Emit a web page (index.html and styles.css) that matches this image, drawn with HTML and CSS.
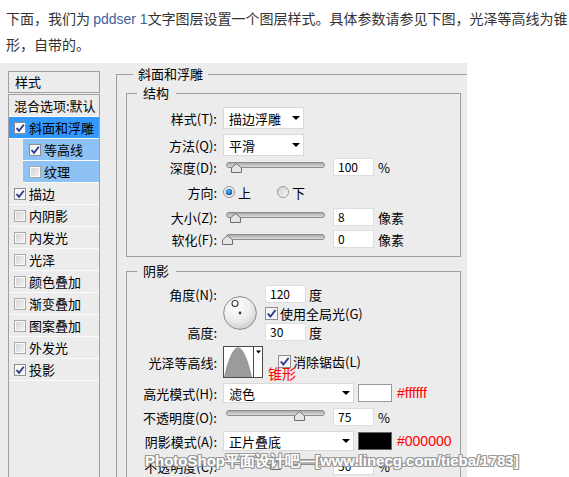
FILE: index.html
```html
<!DOCTYPE html>
<html lang="zh">
<head>
<meta charset="utf-8">
<link rel="stylesheet" href="styles.css">
</head>
<body>
<p class="intro">下面，我们为 <span class="kw">pddser 1</span>文字图层设置一个图层样式。具体参数请参见下图，光泽等高线为锥<br>形，自带的。</p>
<div class="shot">
  <div class="side">
    <div class="side-head">样式</div>
    <ul class="side-list">
      <li class="item">混合选项:默认</li>
      <li class="item sel"><span class="cb"><svg viewBox="0 0 12 12" width="12" height="12"><path d="M2.5 6 L5 8.8 L9.8 2.8" fill="none" stroke="#26368f" stroke-width="1.8"/></svg></span>斜面和浮雕</li>
      <li class="item sub"><span class="cb"><svg viewBox="0 0 12 12" width="12" height="12"><path d="M2.5 6 L5 8.8 L9.8 2.8" fill="none" stroke="#26368f" stroke-width="1.8"/></svg></span>等高线</li>
      <li class="item sub"><span class="cb off"></span>纹理</li>
      <li class="item"><span class="cb"><svg viewBox="0 0 12 12" width="12" height="12"><path d="M2.5 6 L5 8.8 L9.8 2.8" fill="none" stroke="#26368f" stroke-width="1.8"/></svg></span>描边</li>
      <li class="item"><span class="cb off"></span>内阴影</li>
      <li class="item"><span class="cb off"></span>内发光</li>
      <li class="item"><span class="cb off"></span>光泽</li>
      <li class="item"><span class="cb off"></span>颜色叠加</li>
      <li class="item"><span class="cb off"></span>渐变叠加</li>
      <li class="item"><span class="cb off"></span>图案叠加</li>
      <li class="item"><span class="cb off"></span>外发光</li>
      <li class="item"><span class="cb"><svg viewBox="0 0 12 12" width="12" height="12"><path d="M2.5 6 L5 8.8 L9.8 2.8" fill="none" stroke="#26368f" stroke-width="1.8"/></svg></span>投影</li>
      <li class="item blank"></li>
    </ul>
  </div>

  <div class="main">
    <fieldset class="fs-outer">
      <legend>斜面和浮雕</legend>

      <fieldset class="fs-inner fs-struct">
        <legend>结构</legend>
        <div class="row r-style">
          <span class="lbl">样式(T):</span>
          <span class="select"><span>描边浮雕</span><span class="arrow"></span></span>
        </div>
        <div class="row r-method">
          <span class="lbl">方法(Q):</span>
          <span class="select"><span>平滑</span><span class="arrow"></span></span>
        </div>
        <div class="row r-depth">
          <span class="lbl">深度(D):</span>
          <span class="slider"><span class="track"></span><svg class="thumb" style="left:5px" viewBox="0 0 11 10" width="11" height="10"><path d="M0.5 9.5 V4.8 L5.5 0.6 L10.5 4.8 V9.5 Z" fill="#e6e6e6" stroke="#6e6e6e"/></svg></span>
          <span class="num">100</span>
          <span class="unit">%</span>
        </div>
        <div class="row r-dir">
          <span class="lbl">方向:</span>
          <svg class="radio" viewBox="0 0 12 12" width="12" height="12"><defs><radialGradient id="rb" cx="0.4" cy="0.35" r="0.7"><stop offset="0" stop-color="#5fb2f0"/><stop offset="1" stop-color="#0b4f9a"/></radialGradient></defs><circle cx="6" cy="6" r="5.5" fill="#f3f3f3" stroke="#8f8f8f"/><circle cx="6" cy="6" r="3.3" fill="url(#rb)"/></svg>
          <span class="rtext">上</span>
          <svg class="radio r2" viewBox="0 0 12 12" width="12" height="12"><defs><linearGradient id="rg" x1="0" y1="0" x2="1" y2="1"><stop offset="0" stop-color="#cfcfcf"/><stop offset="1" stop-color="#fbfbfb"/></linearGradient></defs><circle cx="6" cy="6" r="5.5" fill="url(#rg)" stroke="#9a9a9a"/></svg>
          <span class="rtext">下</span>
        </div>
        <div class="row r-size">
          <span class="lbl">大小(Z):</span>
          <span class="slider"><span class="track"></span><svg class="thumb" style="left:4px" viewBox="0 0 11 10" width="11" height="10"><path d="M0.5 9.5 V4.8 L5.5 0.6 L10.5 4.8 V9.5 Z" fill="#e6e6e6" stroke="#6e6e6e"/></svg></span>
          <span class="num">8</span>
          <span class="unit">像素</span>
        </div>
        <div class="row r-soft">
          <span class="lbl">软化(F):</span>
          <span class="slider"><span class="track"></span><svg class="thumb" style="left:-4px" viewBox="0 0 11 10" width="11" height="10"><path d="M0.5 9.5 V4.8 L5.5 0.6 L10.5 4.8 V9.5 Z" fill="#e6e6e6" stroke="#6e6e6e"/></svg></span>
          <span class="num">0</span>
          <span class="unit">像素</span>
        </div>
      </fieldset>

      <fieldset class="fs-inner fs-shadow">
        <legend>阴影</legend>
        <div class="angle-grid">
          <span class="lbl a-lbl1">角度(N):</span>
          <svg class="dial" viewBox="0 0 34 34" width="34" height="34"><defs><radialGradient id="dg" cx="0.4" cy="0.3" r="0.75"><stop offset="0" stop-color="#ffffff"/><stop offset="0.6" stop-color="#ececec"/><stop offset="1" stop-color="#c9c9c9"/></radialGradient></defs><circle cx="17" cy="17" r="16.4" fill="url(#dg)" stroke="#8d8d8d"/><circle cx="12" cy="7.5" r="3" fill="#fff" stroke="#3a3a3a" stroke-width="1.1"/><circle cx="17" cy="17" r="1.4" fill="#3a3a3a"/></svg>
          <span class="a-val1"><span class="num">120</span><span class="unit deg">度</span></span>
          <span class="a-chk"><span class="cb big"><svg viewBox="0 0 13 13" width="13" height="13"><path d="M2.8 6.5 L5.4 9.5 L10.6 3" fill="none" stroke="#26368f" stroke-width="1.9"/></svg></span><span class="ctext">使用全局光(G)</span></span>
          <span class="lbl a-lbl3">高度:</span>
          <span class="a-val3"><span class="num">30</span><span class="unit deg">度</span></span>
        </div>
        <div class="row r-contour">
          <span class="lbl">光泽等高线:</span>
          <svg class="contour" viewBox="0 0 40 32" width="40" height="32"><rect x="0.5" y="0.5" width="39" height="31" fill="#fff" stroke="#4a4a4a"/><path d="M1 31 C 5 13, 10 1.2, 15 1.2 C 20 1.2, 25 13, 29 31 Z" fill="#9b9b9b"/><line x1="30.5" y1="1" x2="30.5" y2="31" stroke="#4a4a4a"/><path d="M33 4.5 H38 L35.5 7.5 Z" fill="#000"/></svg>
          <span class="cb big aa"><svg viewBox="0 0 13 13" width="13" height="13"><path d="M2.8 6.5 L5.4 9.5 L10.6 3" fill="none" stroke="#26368f" stroke-width="1.9"/></svg></span><span class="ctext">消除锯齿(L)</span>
          <span class="note">锥形</span>
        </div>
        <div class="row r-hl">
          <span class="lbl">高光模式(H):</span>
          <span class="select wide"><span>滤色</span><span class="arrow"></span></span>
          <span class="swatch white"></span>
          <span class="hex">#ffffff</span>
        </div>
        <div class="row r-op1">
          <span class="lbl">不透明度(O):</span>
          <span class="slider"><span class="track"></span><svg class="thumb" style="left:68px" viewBox="0 0 11 10" width="11" height="10"><path d="M0.5 9.5 V4.8 L5.5 0.6 L10.5 4.8 V9.5 Z" fill="#e6e6e6" stroke="#6e6e6e"/></svg></span>
          <span class="num">75</span>
          <span class="unit">%</span>
        </div>
        <div class="row r-sh">
          <span class="lbl">阴影模式(A):</span>
          <span class="select wide"><span>正片叠底</span><span class="arrow"></span></span>
          <span class="swatch black"></span>
          <span class="hex">#000000</span>
        </div>
        <div class="row r-op2">
          <span class="lbl">不透明度(C):</span>
          <span class="slider"><span class="track"></span><svg class="thumb" style="left:44px" viewBox="0 0 11 10" width="11" height="10"><path d="M0.5 9.5 V4.8 L5.5 0.6 L10.5 4.8 V9.5 Z" fill="#e6e6e6" stroke="#6e6e6e"/></svg></span>
          <span class="num">50</span>
          <span class="unit">%</span>
        </div>
      </fieldset>
    </fieldset>
  </div>
</div>
<div class="watermark">PhotoShop平面设计吧—[www.linecg.com/tieba/1783]</div>
</body>
</html>
```

FILE: styles.css
```css
* { box-sizing: border-box; }
html, body { margin: 0; padding: 0; background: #fff; }
body {
  width: 569px;
  height: 477px;
  overflow: hidden;
  position: relative;
  font-family: "Noto Sans CJK SC", sans-serif;
  color: #333;
}
.intro {
  margin: 0;
  padding: 6px 0 0 6px;
  height: 63px;
  font-size: 14px;
  line-height: 25px;
  white-space: nowrap;
  color: #333;
}
.kw { color: #3f5f9c; font-family: "Liberation Sans", sans-serif; }

.shot {
  width: 467px;
  height: 414px;
  background: #ececec;
  display: flex;
  align-items: flex-start;
  overflow: hidden;
  font-size: 13px;
  color: #000;
}

/* left style list */
.side { margin: 8px 0 0 8px; width: 92px; flex: none; }
.side-head {
  height: 22px;
  border: 1px solid #a0a0a0;
  padding-left: 6px;
  line-height: 19px;
}
.side-list {
  list-style: none;
  margin: 1px 0 0;
  padding: 0;
  border: 1px solid #a0a0a0;
  border-bottom: none;
  height: 400px;
}
.item {
  height: 22px;
  border-bottom: 1px solid #fbfbfb;
  display: flex;
  align-items: center;
  gap: 3px;
  padding-left: 5px;
  line-height: 21px;
  white-space: nowrap;
}
.item.sel { background: #3399ff; }
.item.sub { background: #8ec2f4; margin-left: 14px; padding-left: 6px; }
.item.blank { border-bottom: none; }

.cb {
  width: 12px;
  height: 12px;
  flex: none;
  display: inline-block;
  border: 1px solid #8f8f8f;
  background: #f6f6f6;
  position: relative;
}
.cb svg { position: absolute; left: -1px; top: -1px; display: block; }
.cb.off {
  border-color: #a8a8a8;
  background: linear-gradient(135deg, #d2d2d2, #f4f4f4);
  box-shadow: inset 0 0 0 1px #fbfbfb;
}
.cb.big { width: 13px; height: 13px; }

/* right panel */
.main { flex: none; width: 367px; }
fieldset {
  margin: 0;
  padding: 0;
  min-width: 0;
  border: 1px solid #a0a0a0;
}
legend { padding: 0 5px; line-height: 16px; font-size: 13px; }
.fs-outer {
  margin: 3px 0 0 16px;
  width: 400px;
  border-right: none;
  border-bottom: none;
}
.fs-outer > legend { margin-left: 16px; }
.fs-inner { margin-left: 9px; width: 335px; }
.fs-inner > legend { margin-left: 10px; padding: 0 7px 0 6px; }
.fs-struct { margin-top: 3px; padding: 6px 0 7px; }
.fs-shadow { margin-top: 6px; padding-top: 6px; border-bottom: none; height: 300px; }

.row { display: flex; align-items: center; position: relative; }
.lbl {
  width: 90px;
  flex: none;
  text-align: right;
  margin-right: 6px;
  white-space: nowrap;
}
.r-style { height: 22px; }
.r-method { height: 22px; margin-top: 5px; }
.r-depth { height: 20px; margin-top: 1px; }
.r-dir { height: 20px; margin-top: 5px; }
.r-size { height: 20px; margin-top: 5px; }
.r-soft { height: 20px; margin-top: 2px; }

.select {
  width: 81px;
  height: 22px;
  background: #fff;
  border: 1px solid #d9d9d9;
  display: flex;
  align-items: center;
  justify-content: space-between;
  padding: 0 3px 0 5px;
}
.select.wide { width: 131px; height: 20px; }
.arrow {
  width: 0;
  height: 0;
  border-left: 4px solid transparent;
  border-right: 4px solid transparent;
  border-top: 4px solid #000;
}

.slider {
  position: relative;
  width: 99px;
  height: 20px;
  margin-left: 3px;
  flex: none;
  display: block;
}
.track {
  display: block;
  margin-top: 5px;
  height: 6px;
  border-radius: 3px;
  border: 1px solid #8c8c8c;
  background: linear-gradient(#a9a9a9, #dcdcdc);
}
.thumb { position: absolute; top: 6px; display: block; }

.num {
  width: 41px;
  height: 18px;
  flex: none;
  background: #fff;
  border: 1px solid #dedede;
  margin-left: 8px;
  padding-left: 4px;
  font-size: 12px;
  line-height: 16px;
  display: inline-block;
}
.unit { margin-left: 4px; }
.unit.deg { margin-left: 3px; }

.radio { display: block; flex: none; }
.rtext { margin-left: 3px; }
.radio.r2 { margin-left: 26px; }

/* angle block */
.angle-grid {
  display: grid;
  grid-template-columns: 90px 36px auto;
  grid-template-rows: 18px 18px 18px;
  column-gap: 6px;
  row-gap: 1px;
  align-items: center;
}
.angle-grid .lbl { margin-right: 0; }
.a-lbl1 { grid-column: 1; grid-row: 1; }
.a-lbl3 { grid-column: 1; grid-row: 3; }
.dial { grid-column: 2; grid-row: 1 / 4; display: block; }
.a-val1, .a-val3, .a-chk { grid-column: 3; display: flex; align-items: center; }
.a-val1 { grid-row: 1; }
.a-chk { grid-row: 2; }
.a-val3 { grid-row: 3; }
.angle-grid .num { margin-left: 0; }
.ctext { margin-left: 2px; white-space: nowrap; }

.r-contour { height: 32px; margin-top: 5px; }
.contour { display: block; flex: none; }
.cb.aa { margin-left: 15px; margin-top: -2px; }
.r-contour .ctext { margin-top: -2px; }
.note {
  position: absolute;
  left: 141px;
  top: 19px;
  color: #ff0000;
  font-size: 14px;
  line-height: 16px;
}

.r-hl { height: 20px; margin-top: 5px; }
.r-op1 { height: 18px; margin-top: 5px; }
.r-sh { height: 20px; margin-top: 5px; }
.r-op2 { height: 18px; margin-top: 6px; }
.r-op1 .track, .r-op2 .track { margin-top: 3px; }
.r-op1 .thumb, .r-op2 .thumb { top: 4px; }

.swatch {
  width: 34px;
  height: 18px;
  margin-left: 4px;
  border: 1px solid #999;
  flex: none;
}
.swatch.white { background: #fff; }
.swatch.black { background: #000; border-color: #666; }
.hex {
  margin-left: 5px;
  color: #ff0000;
  font-size: 14px;
  font-family: "Liberation Sans", sans-serif;
}

.watermark {
  position: absolute;
  left: 145px;
  top: 452px;
  font-family: "Liberation Sans", sans-serif;
  font-weight: bold;
  font-size: 15px;
  line-height: 17px;
  color: #fff;
  white-space: nowrap;
  text-shadow: 1px 0 0 #9a9a9a, -1px 0 0 #9a9a9a, 0 1px 0 #9a9a9a, 0 -1px 0 #9a9a9a, 1px 1px 0 #9a9a9a, -1px -1px 0 #9a9a9a, 1px -1px 0 #9a9a9a, -1px 1px 0 #9a9a9a;
}
```
